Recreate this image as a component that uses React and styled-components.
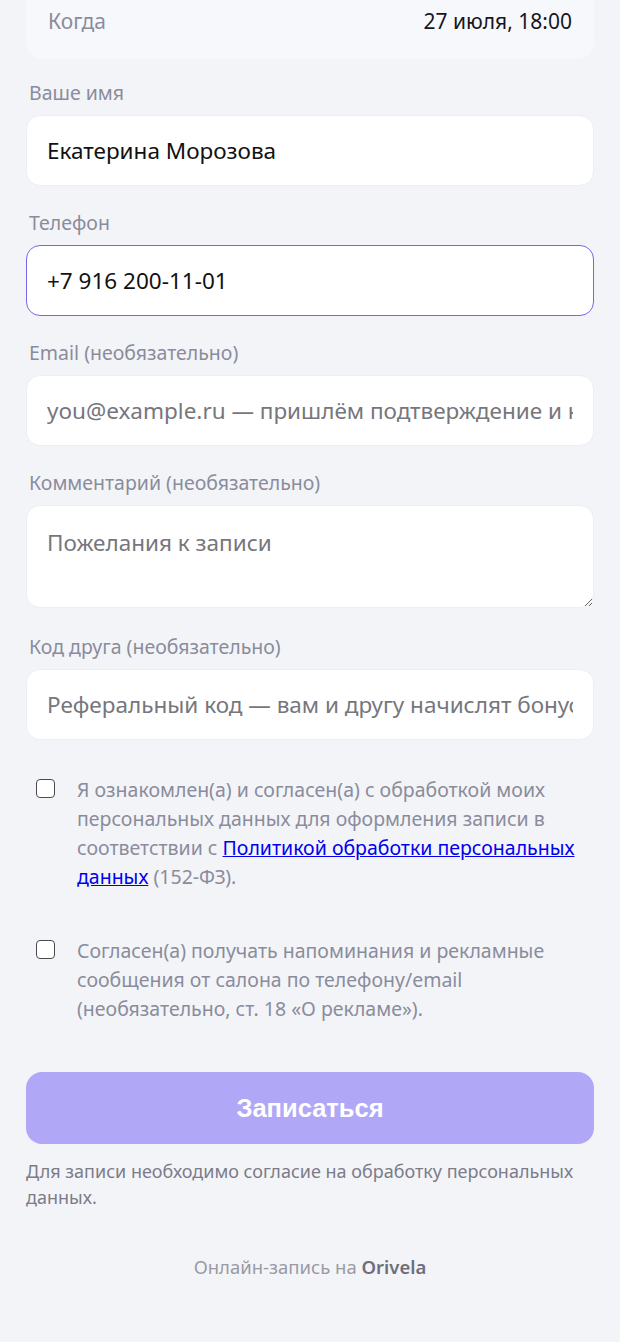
import React from "react";
import styled, { createGlobalStyle } from "styled-components";

const GlobalStyle = createGlobalStyle`
  * { box-sizing: border-box; }
  body {
    margin: 0;
    background: #f3f4f8;
    font-family: "Noto Sans", "Open Sans", Arial, sans-serif;
    color: #1a1a22;
  }
`;

const Page = styled.main`
  padding: 0 26px 60px;
`;

const SummaryCard = styled.section`
  background: #f7f8fc;
  border-radius: 0 0 16px 16px;
  padding: 3px 22px 20px;
`;

const SummaryRow = styled.div`
  display: flex;
  justify-content: space-between;
  align-items: center;
  font-size: 21px;
  line-height: 36px;
`;

const SummaryKey = styled.span`
  color: #8a8c9c;
`;

const SummaryValue = styled.span`
  color: #16161c;
`;

const Form = styled.form`
  display: flex;
  flex-direction: column;
  gap: 25px;
  margin-top: 22px;
`;

const Field = styled.label`
  display: flex;
  flex-direction: column;
  gap: 10px;
`;

const Label = styled.span`
  font-size: 19.5px;
  line-height: 24px;
  color: #8a8c9c;
  padding-left: 3px;
`;

const Input = styled.input`
  width: 100%;
  height: 71px;
  padding: 0 20px;
  border: ${({ $focused }) => ($focused ? "1.5px solid #7566ea" : "1px solid #eceef4")};
  border-radius: 14px;
  background: #fff;
  font-family: inherit;
  font-size: 22.5px;
  color: #111;
  outline: none;

  &::placeholder {
    color: #76767c;
  }
`;

const TextArea = styled.textarea`
  width: 100%;
  height: 103px;
  margin-bottom: 2px;
  padding: 21px 20px;
  border: 1px solid #eceef4;
  border-radius: 14px;
  background: #fff;
  font-family: inherit;
  font-size: 22.5px;
  line-height: 32px;
  color: #111;
  outline: none;
  resize: vertical;
  display: block;

  &::placeholder {
    color: #76767c;
  }
`;

const Consent = styled.label`
  display: flex;
  align-items: flex-start;
  gap: 22px;
  padding: 10px;
  font-size: 19.5px;
  line-height: 29px;
  color: #8a8c9c;
`;

const Check = styled.input.attrs({ type: "checkbox" })`
  appearance: none;
  flex: none;
  width: 19px;
  height: 19px;
  margin: 4px 0 0;
  border: 1.5px solid #4a4a50;
  border-radius: 4px;
  background: #fff;
`;

const PolicyLink = styled.a`
  color: #0000ee;
  text-decoration: underline;
`;

const Submit = styled.button`
  margin-top: 14px;
  height: 72px;
  border: none;
  border-radius: 16px;
  background: #b0a8f7;
  color: #fff;
  font-family: "Liberation Sans", Arial, sans-serif;
  font-weight: 700;
  font-size: 25.5px;
  cursor: not-allowed;
`;

const Note = styled.p`
  margin: -11px 0 0;
  font-size: 18px;
  line-height: 26px;
  color: #7b7c88;
`;

const Footer = styled.footer`
  margin-top: 44px;
  text-align: center;
  font-size: 18.5px;
  line-height: 26px;
  color: #9a9aa4;

  b {
    color: #6e6e7a;
    font-weight: 600;
  }
`;

export default function App() {
  return (
    <>
      <GlobalStyle />
      <Page>
        <SummaryCard>
          <SummaryRow>
            <SummaryKey>Когда</SummaryKey>
            <SummaryValue>27 июля, 18:00</SummaryValue>
          </SummaryRow>
        </SummaryCard>

        <Form onSubmit={(e) => e.preventDefault()}>
          <Field>
            <Label>Ваше имя</Label>
            <Input defaultValue="Екатерина Морозова" />
          </Field>
          <Field>
            <Label>Телефон</Label>
            <Input $focused defaultValue="+7 916 200-11-01" />
          </Field>
          <Field>
            <Label>Email (необязательно)</Label>
            <Input placeholder="you@example.ru — пришлём подтверждение и напоминание" />
          </Field>
          <Field>
            <Label>Комментарий (необязательно)</Label>
            <TextArea placeholder="Пожелания к записи" />
          </Field>
          <Field>
            <Label>Код друга (необязательно)</Label>
            <Input placeholder="Реферальный код — вам и другу начислят бонусы" />
          </Field>

          <Consent>
            <Check />
            <span>
              Я ознакомлен(а) и согласен(а) с обработкой моих персональных данных для
              оформления записи в соответствии с{" "}
              <PolicyLink href="#privacy">Политикой обработки персональных данных</PolicyLink>{" "}
              (152-ФЗ).
            </span>
          </Consent>
          <Consent>
            <Check />
            <span>
              Согласен(а) получать напоминания и рекламные сообщения от салона по
              телефону/email (необязательно, ст. 18 «О рекламе»).
            </span>
          </Consent>

          <Submit type="submit" disabled>
            Записаться
          </Submit>
          <Note>Для записи необходимо согласие на обработку персональных данных.</Note>
        </Form>

        <Footer>
          Онлайн-запись на <b>Orivela</b>
        </Footer>
      </Page>
    </>
  );
}
